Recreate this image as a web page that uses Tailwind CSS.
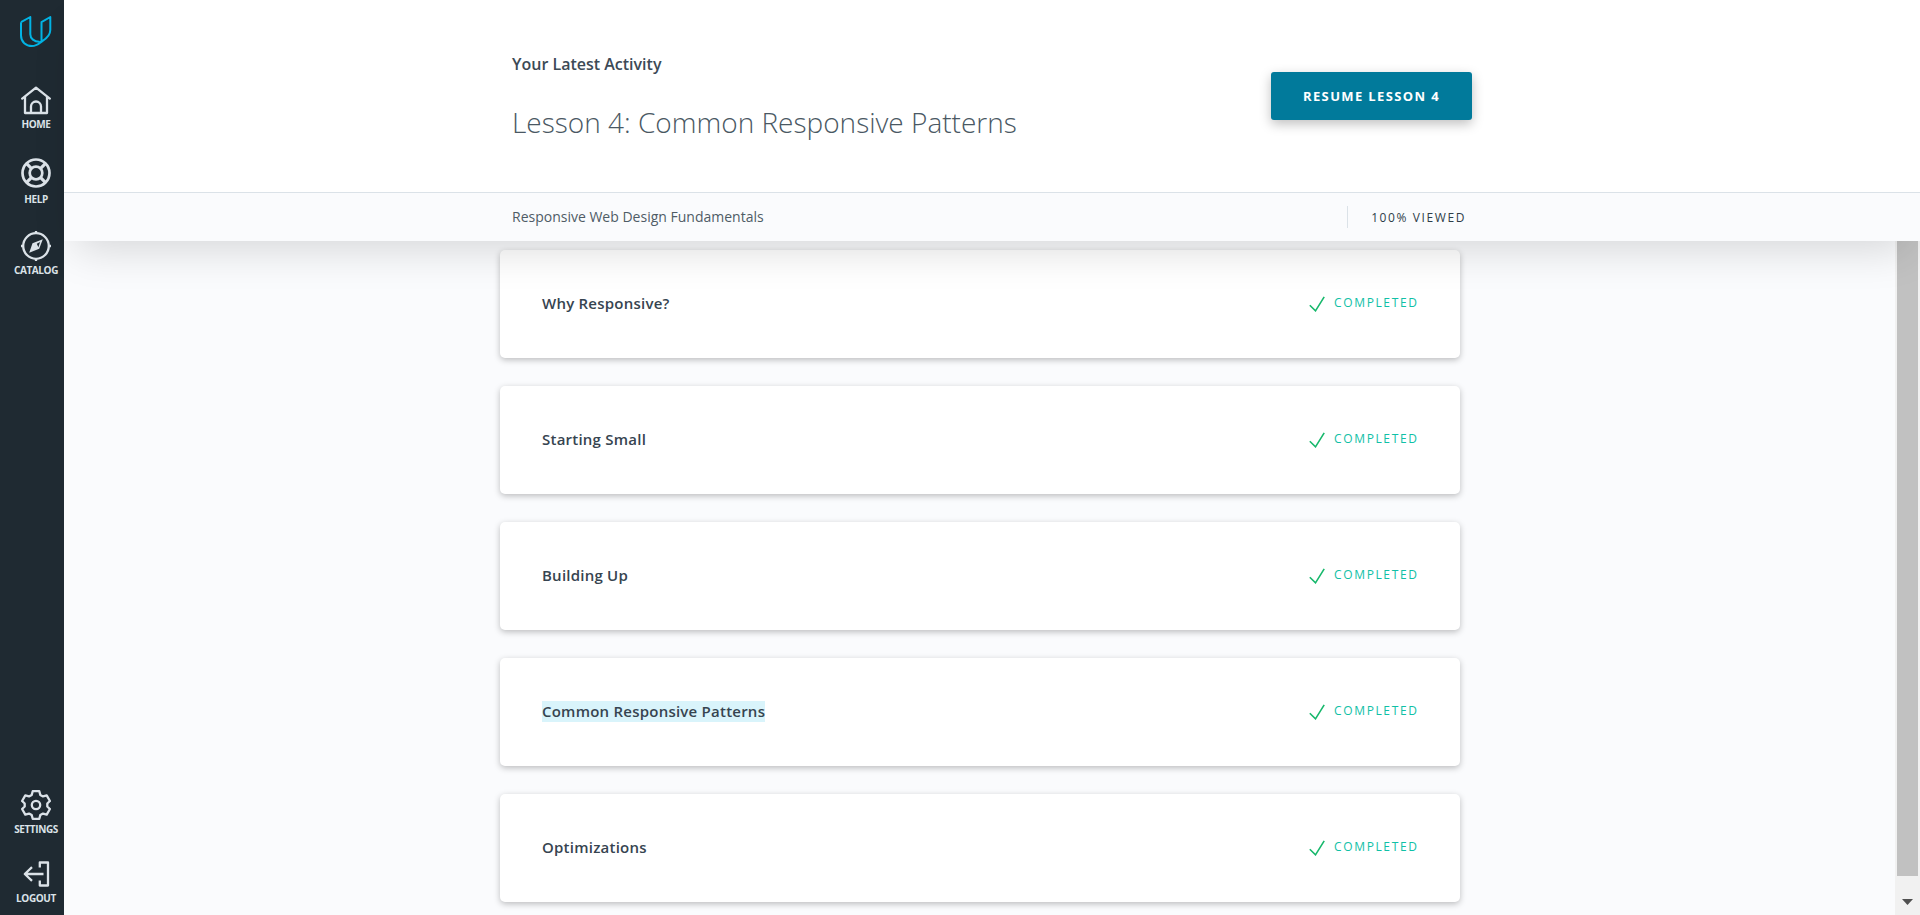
<!DOCTYPE html>
<html lang="en">
<head>
<meta charset="utf-8">
<title>Responsive Web Design Fundamentals</title>
<script src="https://cdn.jsdelivr.net/npm/@tailwindcss/browser@4"></script>
</head>
<body class="flex h-[915px] w-[1920px] overflow-hidden bg-[#fafbfd] font-['Open_Sans',sans-serif] text-[#2e3d49]">
<nav class="flex w-16 shrink-0 flex-col bg-[#1f2a32] pl-2 text-[10px] font-bold leading-[14px] tracking-[-0.4px] text-[#dbe2e8]">
  <a class="flex h-[86px] justify-center pt-4">
    <svg class="h-8 w-8" viewBox="0 0 32 32" fill="none" stroke="#02b3e4" stroke-width="2" stroke-linejoin="round"><path d="M1 6.200 10.300 1v17.200c0 4.300 4 7.600 8.900 7.600M1 6.200v13.300C1 26 6 30 12 30c4.500 0 7-2.500 10-4.600 5-3.100 8.300-6.200 8.300-11.400V1L21.500 6.200v19.400c-1 .4-2 .3-2.300.2"/></svg>
  </a>
  <a class="flex h-[72px] flex-col items-center">
    <svg class="h-[30px] w-[30px]" viewBox="0 0 30 30" fill="none" stroke="currentColor" stroke-width="2.300" stroke-linecap="round" stroke-linejoin="round"><path d="M1.200 12.600 15 1.600l13.800 11M4 11v16h22V11M10 27v-6.500a5 5 0 0 1 10 0V27"/></svg>
    <span class="mt-px">HOME</span>
  </a>
  <a class="flex h-[73px] flex-col items-center">
    <svg class="h-[30px] w-[30px]" viewBox="0 0 30 30" fill="none" stroke="currentColor" stroke-width="2.700"><circle cx="15" cy="15" r="13.500"/><circle cx="15" cy="15" r="6.300"/><path d="m5.400 5.400 5.200 5.200m8.800 8.800 5.200 5.200m0-19.200-5.200 5.200m-8.800 8.800-5.200 5.200" stroke-width="3.200"/></svg>
    <span class="mt-[4px]">HELP</span>
  </a>
  <a class="flex flex-col items-center">
    <svg class="h-[30px] w-[30px]" viewBox="0 0 30 30" fill="none" stroke="currentColor" stroke-width="2.300"><circle cx="15" cy="15" r="12.800"/><path d="M15 0v3m0 24v3M0 15h3m24 0h3"/><path fill="currentColor" stroke="none" fill-rule="evenodd" d="M21.800 8.200 18.200 17.700 8.200 21.800 11.500 12.200ZM15.800 12.800l1.600 3.400 1.600-5.100Z"/></svg>
    <span class="mt-[2px]">CATALOG</span>
  </a>
  <a class="mt-auto flex h-[69px] flex-col items-center">
    <svg class="h-[30px] w-[30px]" viewBox="0 0 30 30" fill="none" stroke="currentColor" stroke-width="2.300" stroke-linejoin="round"><path d="M11.700 1.200h6.600l1 3.700 2.700 1.500 3.700-1 3.200 5.600-2.600 2.500v3l2.600 2.500-3.200 5.600-3.700-1-2.700 1.500-1 3.700h-6.600l-1-3.700L8 23.600l-3.700 1L1.100 19l2.600-2.500v-3L1.100 11l3.200-5.600 3.700 1 2.700-1.500Z"/><circle cx="15" cy="15" r="4.200"/></svg>
    <span class="mt-[2px]">SETTINGS</span>
  </a>
  <a class="flex h-[56px] flex-col items-center">
    <svg class="h-[30px] w-[30px]" viewBox="0 0 30 30" fill="none" stroke="currentColor" stroke-width="2.300"><path d="M18.800 8.500V3.500h8.200v23h-8.200v-5M22.500 15H4m7-6.800L3.800 15l7.200 6.800" stroke-linejoin="round"/></svg>
    <span class="mt-[2px]">LOGOUT</span>
  </a>
</nav>

<div class="flex min-w-0 flex-1 flex-col">
  <header class="relative z-10 shrink-0 shadow-[0_20px_40px_-12px_rgba(0,0,0,0.15)]">
    <div class="flex h-[193px] items-start justify-between border-b border-[#dbe2e8] bg-white pl-[448px] pr-[448px]">
      <div class="pt-[52px]">
        <p class="text-base leading-6 font-semibold text-[#3c4a56]">Your Latest Activity</p>
        <h1 class="mt-[26px] text-[28px] leading-[40px] font-light whitespace-nowrap text-[#4a5863]">Lesson 4: Common Responsive Patterns</h1>
      </div>
      <button class="mt-[72px] h-12 w-[201px] rounded-[3px] bg-[#017a9b] pt-px text-[13px] font-bold tracking-[1.370px] text-white shadow-[0_4px_12px_rgba(0,0,0,0.25)]">RESUME LESSON 4</button>
    </div>
    <div class="flex h-12 items-center justify-between bg-[#fafbfd] pl-[448px] pr-[454px]">
      <span class="text-sm text-[#4f5c66]">Responsive Web Design Fundamentals</span>
      <span class="flex h-[22px] items-center border-l border-[#dbe2e8] pl-[23px] text-xs tracking-[1.600px]"><span class="pt-[2px]">100% VIEWED</span></span>
    </div>
  </header>

  <div class="flex min-h-0 flex-1 justify-between">
    <main id="lessons" class="flex w-[960px] ml-[436px] flex-col gap-7 pt-[9px]"></main>
    <div class="flex w-[25px] shrink-0 flex-col items-center bg-[#f1f1f1]">
      <div class="h-[635px] w-[21px] bg-[#c1c1c1]"></div>
      <svg class="mt-[23px] h-[6px] w-[11px]" viewBox="0 0 11 6" fill="#505050"><path d="M0 0h11L5.500 6Z"/></svg>
    </div>
  </div>
</div>

<template id="card">
  <article class="flex h-[108px] shrink-0 items-center justify-between rounded-[5px] bg-white pb-[2px] pl-[42px] pr-[41.5px] shadow-[0_2px_6px_rgba(0,0,0,0.25)]">
    <h2 class="text-[15px] leading-[21px] font-semibold tracking-[0.230px] text-[#364450]"></h2>
    <div class="flex items-center gap-[9px] pt-[2px] text-xs tracking-[1.620px] text-[#10c0a6]">
      <svg class="h-4 w-4" viewBox="0 0 16 16" fill="none" stroke="#17b86c" stroke-width="1.600"><path d="M.8 9.200 6.500 14.800 15.200.8"/></svg>
      <span class="-mt-[2px]">COMPLETED</span>
    </div>
  </article>
</template>
<script>
const list = document.getElementById('lessons');
['Why Responsive?', 'Starting Small', 'Building Up', 'Common Responsive Patterns', 'Optimizations'].forEach((name, i) => {
  const card = document.getElementById('card').content.cloneNode(true);
  const title = card.querySelector('h2');
  title.textContent = name;
  if (i === 3) title.classList.add('bg-[#d9f4fb]');
  list.append(card);
});
</script>
</body>
</html>
